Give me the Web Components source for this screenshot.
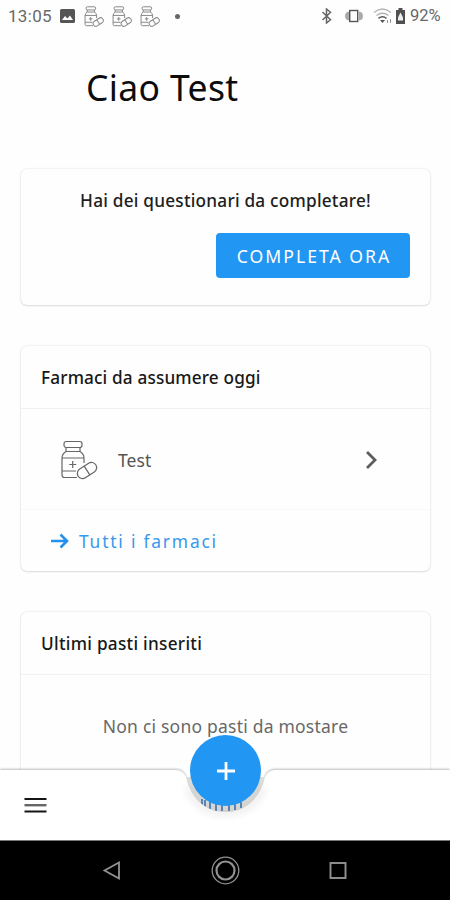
<!DOCTYPE html>
<html lang="it"><head><meta charset="utf-8"><title>Ciao Test</title>
<style>html,body{margin:0;height:100%;overflow:hidden;background:#fefefe}body{font-family:"Noto Sans","Open Sans",sans-serif}</style></head>
<body><health-app></health-app>
<script>
const define = (name, html) => customElements.define(name, class extends HTMLElement {
  constructor() {
    super();
    const t = document.createElement('template');
    t.innerHTML = html;
    this.attachShadow({mode: 'open'}).append(t.content.cloneNode(true));
  }
});

define('pill-bottle', `<style>:host{display:block;flex:none}svg{display:block;width:100%;height:100%}</style>
<svg viewBox="0 0 38 40" fill="none" stroke="currentColor" stroke-width="var(--line,1.2)" style="stroke-width:var(--line,1.2)" stroke-linejoin="round">
<rect x="4" y="1.5" width="18" height="6" rx="2.2"/><path d="M6 7.5v4Q2 14 2 18v17q0 2.500 2.500 2.500H17M20 7.500v4q4 2.500 4 6.500v5M6 11.500h14M2 18h22M2 31h14"/><path d="M12.700 21v7M9.200 24.500h7"/>
<g transform="rotate(-33 27 30.500)"><rect x="16.500" y="25.300" width="21" height="10.400" rx="5.200" fill="#fefefe"/><path d="M27 25.300v10.400"/></g></svg>`);

define('status-bar', `<style>:host{display:flex;height:32px;align-items:center;box-sizing:border-box;padding:0 7px 0 8px;color:#686868;font:17px/32px Roboto,sans-serif}
svg{display:block;flex:none}.time{width:52px;letter-spacing:.3px}.pills{display:flex;gap:8px;margin-left:9px;color:#888}pill-bottle{width:20px;height:21px;--line:1.900}.dot{width:5px;height:5px;border-radius:50%;background:#666;margin-left:15px}.right{margin-left:auto;display:flex;align-items:center}.pct{width:33px;margin-left:4px;font-size:16.500px;letter-spacing:0}</style>
<span class="time">13:05</span>
<svg width="15" height="14" viewBox="0 0 15 14"><rect width="15" height="14" rx="1.500" fill="#555"/><path d="M2 11l3-4 2.500 2.500L10 6.500l3 4.500z" fill="#fff"/></svg>
<div class="pills"><pill-bottle></pill-bottle><pill-bottle></pill-bottle><pill-bottle></pill-bottle></div><i class="dot"></i>
<div class="right">
<svg width="12" height="16" viewBox="0 0 12 16" fill="none" stroke="#666" stroke-width="1.500"><path d="M1.500 4l8 7.800L5.500 15V1l4 3.200L1.500 12"/></svg>
<svg style="margin-left:11px" width="20" height="14" viewBox="0 0 20 14"><path d="M5 2.500Q1 3 1 7t4 4.500zM15 2.500q4 .5 4 4.500t-4 4.500z" fill="#aaa"/><rect x="5.700" y="1.500" width="8" height="11" fill="#fff" stroke="#555" stroke-width="1.400"/></svg>
<svg style="margin-left:9px" width="20" height="16" viewBox="0 0 20 16" fill="none"><path d="M1 4.500q8.500-7 17 0M3.500 7.500q6-4.500 12 0" stroke="#b4b4b4" stroke-width="1.300"/><path d="M5.500 10.300q4-3 8 0" stroke="#555" stroke-width="1.500"/><path d="M7 12h5l-2.500 3z" fill="#555"/><path d="M14.500 15v-3M17.500 15v-4" stroke="#999"/></svg>
<svg style="margin-left:2px" width="11" height="16" viewBox="0 0 11 16"><path d="M3.500 0h4v2H10v14H1V2h2.500z" fill="#505050"/><path d="M5.500 4.500L3 9.500v3h5v-3z" fill="#eee"/></svg>
<span class="pct">92%</span></div>`);

define('info-card', `<style>:host{display:block;box-sizing:border-box;border-radius:6px;background:#fefefe;box-shadow:0 0 2px rgba(0,0,0,.15),0 1px 2px rgba(0,0,0,.1)}
::slotted(h2){margin:0;padding:0 20px;box-sizing:border-box;height:63px;font-size:17.200px;line-height:63px;font-weight:500;color:#181818;border-bottom:1px solid #f1f1f1;letter-spacing:var(--title-space,.15px)}</style><slot name="title"></slot><slot></slot>`);

define('action-button', `<style>:host{display:block}button{display:block;width:194px;height:45px;padding:0;border:0;border-radius:4px;background:#2196f3;color:#fff;font:17.600px/46px "Noto Sans",sans-serif;letter-spacing:2px;text-indent:2px}</style><button><slot></slot></button>`);

define('medicine-row', `<style>:host{display:flex;align-items:center;height:101px;box-sizing:border-box;padding:1px 52px 0 39px;color:#555;font-size:17.500px;border-bottom:1px solid #f8f8f8}pill-bottle{width:38px;height:40px;color:#666}span{flex:1;margin-left:20px;letter-spacing:.1px}svg{display:block}</style>
<pill-bottle></pill-bottle><span><slot></slot></span><svg width="14" height="20" viewBox="0 0 14 20" fill="none" stroke="#5d5d5d" stroke-width="2.800"><path d="M3 2l8 8-8 8"/></svg>`);

define('card-link', `<style>:host{display:flex;align-items:center;height:61px;padding-left:30px;color:#3898ec;font-size:17.400px;letter-spacing:1.800px}svg{display:block;margin-right:10px}</style>
<svg width="18" height="16" viewBox="0 0 18 16" fill="none" stroke="#2491ef" stroke-width="2.600"><path d="M0 8h16M9.500 1.500L16 8l-6.500 6.500"/></svg><slot></slot>`);

define('bottom-bar', `<style>:host{display:block;position:absolute;left:0;right:0;bottom:60px;height:110px}
.shape{display:block}.menu{position:absolute;left:24px;top:67px;width:23px;height:16px;padding:0;border:0;background:none}.menu svg,.fab svg{display:block}
.fab{position:absolute;left:190px;top:5px;width:71px;height:71px;border:0;padding:0;border-radius:50%;background:#2196f3;display:grid;place-items:center}</style>
<svg class="shape" width="450" height="110" viewBox="0 0 450 110">
<defs><filter id="s" x="-5%" y="-20%" width="110%" height="140%"><feGaussianBlur stdDeviation="1.200"/></filter><filter id="h" x="-30%" y="-30%" width="160%" height="160%"><feGaussianBlur stdDeviation="4"/></filter></defs>
<path d="M0 40H176Q183 40 186 47C190 66 204 82 225.500 82S261 66 265 47Q268 40 275 40H450V110H0z" fill="#000" opacity=".26" filter="url(#s)" transform="translate(0 -1)"/>
<path d="M186 47H265C261 66 247 82 225.500 82S190 66 186 47" fill="#dcdcda"/>
<path d="M202 69v6M205 70v7M210 71v8M216 73v8M222 73v8M229 73v8M235 72v8M241 72v6" stroke="#5684b5" stroke-width="1.900"/>
<path d="M0 40H176Q183 40 186 47C190 66 204 82 225.500 82S261 66 265 47Q268 40 275 40H450V110H0z" fill="#fff"/>
<path d="M188 57C195 75 208 83 225.500 83S256 75 263 57" fill="none" stroke="#000" stroke-width="4" opacity=".12" filter="url(#h)"/>
</svg>
<button class="menu" aria-label="Menu"><svg width="23" height="16" viewBox="0 0 23 16"><path d="M.5 2h22M.5 14.500h22" stroke="#151515" stroke-width="2"/><path d="M.5 8.200h22" stroke="#666" stroke-width="2.400"/></svg></button>
<button class="fab" aria-label="Aggiungi"><svg width="18" height="18" viewBox="0 0 18 18" stroke="#fff" stroke-width="2.800"><path d="M0 9h18M9 0v18"/></svg></button>`);

define('system-nav', `<style>:host{display:block;position:absolute;left:0;right:0;bottom:0;height:60px;background:#000;box-sizing:border-box;border-top:1px solid #777}svg{display:block;margin-top:-1px}</style>
<svg width="450" height="60" viewBox="0 0 450 60" fill="none" stroke="#929292"><path d="M104.500 30.500L119 22.500V38.500z" stroke-width="1.800"/><circle cx="225.500" cy="30.500" r="13.300" stroke-width="1.300"/><circle cx="225.500" cy="30.500" r="9" stroke-width="2.200"/><rect x="330.500" y="23" width="15" height="15" stroke-width="1.900"/></svg>`);

define('health-app', `<style>:host{display:block;position:relative;height:900px;overflow:hidden}
h1{margin:0;padding:28px 0 0 86px;font-size:35.500px;line-height:54px;font-weight:450;color:#0c0c0c;height:137px;box-sizing:border-box;letter-spacing:.35px}
main{display:flex;flex-direction:column;gap:41px;padding:0 20px 0 21px}
.quest{height:136px;display:flex;flex-direction:column;align-items:flex-end;padding:19px 20px 0 0}.quest p{margin:0 0 20px;align-self:stretch;padding-left:20px;text-align:center;font-size:17.200px;line-height:25px;font-weight:500;color:#202020;letter-spacing:.23px}
.meals{height:200px;--title-space:.28px}.empty{margin:0;text-align:center;font-size:17.500px;line-height:28px;padding-top:37px;color:#686868;letter-spacing:.22px}</style>
<status-bar></status-bar><h1>Ciao Test</h1>
<main><info-card class="quest"><p>Hai dei questionari da completare!</p><action-button>COMPLETA ORA</action-button></info-card>
<info-card class="meds"><h2 slot="title">Farmaci da assumere oggi</h2><medicine-row>Test</medicine-row><card-link>Tutti i farmaci</card-link></info-card>
<info-card class="meals"><h2 slot="title">Ultimi pasti inseriti</h2><p class="empty">Non ci sono pasti da mostare</p></info-card></main>
<bottom-bar></bottom-bar><system-nav></system-nav>`);
</script></body></html>
